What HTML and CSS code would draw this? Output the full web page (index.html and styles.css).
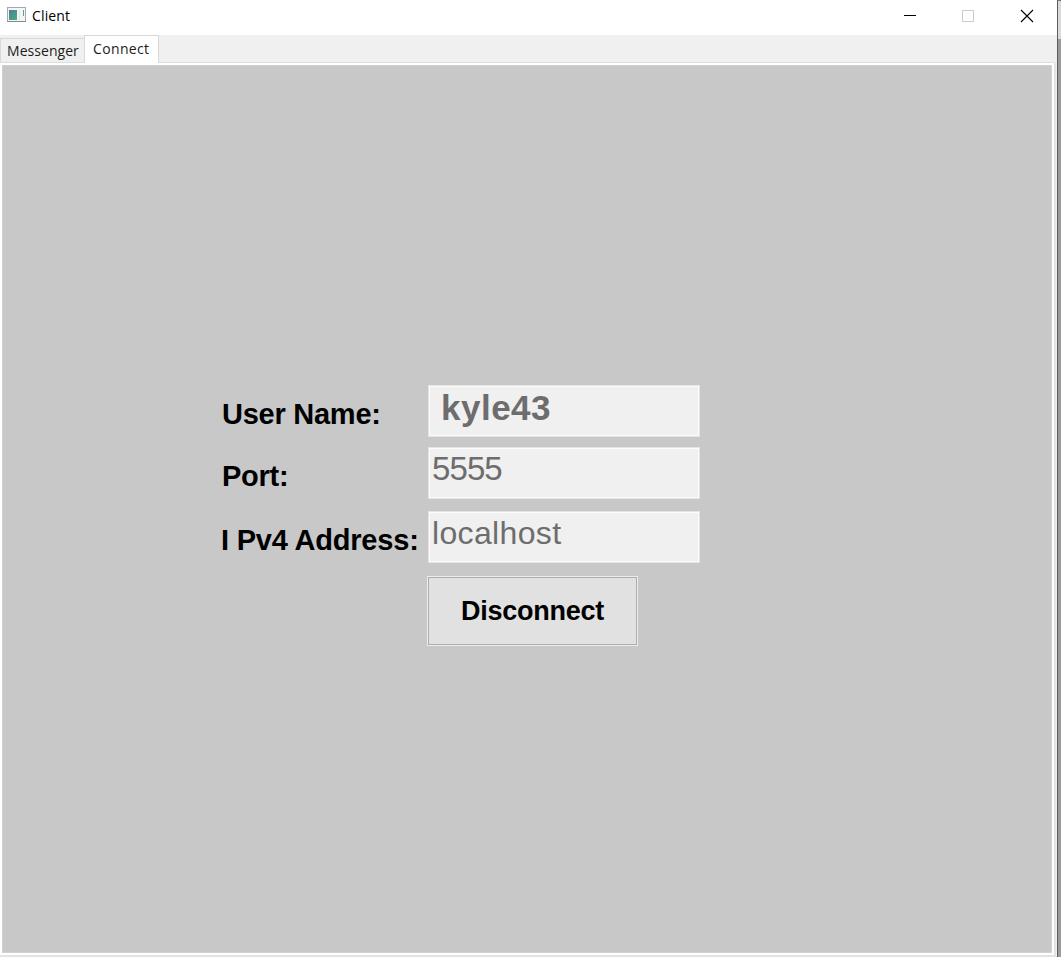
FILE: index.html
```
<!DOCTYPE html>
<html lang="en">
<head>
<meta charset="utf-8">
<title>Client</title>
<link rel="stylesheet" href="styles.css">
</head>
<body>
<div class="window">
  <header class="titlebar">
    <svg class="app-icon" width="19" height="16" viewBox="0 0 19 16">
      <defs><linearGradient id="g" x1="0" y1="0" x2="1" y2="1"><stop offset="0" stop-color="#4a7c9c"/><stop offset="1" stop-color="#4fae78"/></linearGradient></defs>
      <rect x=".5" y=".5" width="18" height="14" fill="#f4f5f7" stroke="#a4a8af"/>
      <path d="M0 14.500h19" stroke="#858a92"/>
      <rect x="2" y="3" width="8" height="10" fill="url(#g)"/>
      <path d="M12.500 3v10" stroke="#e2e6e9"/>
      <path d="M16.500 3v6" stroke="#55a58c"/>
    </svg>
    <span class="title">Client</span>
    <svg class="controls" width="132" height="16" viewBox="0 0 132 16" fill="none">
      <path d="M0 7.500h12" stroke="#000"/>
      <rect x="58.500" y="2.500" width="11" height="11" stroke="#ccc"/>
      <path d="M117 2l12 12M129 2l-12 12" stroke="#000" stroke-width="1.100"/>
    </svg>
  </header>
  <nav class="tabs">
    <div class="tab">Messenger</div>
    <div class="tab active">Connect</div>
  </nav>
  <div class="pane">
    <main class="page">
      <form class="form">
        <label class="label">User Name:</label>
        <div class="field"><span class="user">kyle43</span></div>
        <label class="label port-label">Port:</label>
        <div class="field port-field"><span class="port">5555</span></div>
        <label class="label address">I Pv4 Address:</label>
        <div class="field"><span class="host">localhost</span></div>
        <button class="button" type="button">Disconnect</button>
      </form>
    </main>
  </div>
</div>
<div class="behind"></div>
</body>
</html>
```
FILE: styles.css
```
* { box-sizing: border-box; }
body {
  margin: 0;
  width: 1061px;
  height: 957px;
  display: flex;
  overflow: hidden;
  font-family: "Liberation Sans", Arial, sans-serif;
  white-space: nowrap;
}
.window {
  width: 1057px;
  height: 957px;
  display: flex;
  flex-direction: column;
  background: #f0f0f0;
}
.behind {
  width: 4px;
  border-left: 1px solid #5c5c5c;
  border-top: 1px solid #8b6f64;
  background: linear-gradient(#dbd9d9 38px, #9b9b9b 38px);
}
.titlebar {
  height: 35px;
  flex: none;
  display: flex;
  align-items: flex-start;
  padding: 7px 21px 0 7px;
  background: #fff;
}
.title {
  margin: -1px 0 0 6px;
  font: 14px/20px "Open Sans", sans-serif;
  letter-spacing: 0.15px;
}
.controls { margin: 1px 0 0 auto; }
.tabs {
  width: 1055px;
  height: 28px;
  flex: none;
  display: flex;
  align-items: flex-end;
  box-shadow: inset 0 -1px #dedede;
  font: 14px/20px "Open Sans", sans-serif;
  color: #1c1c1c;
}
.tab {
  width: 84px;
  height: 25px;
  padding: 2px 0 0 6px;
  border: 1px solid #d9d9d9;
  border-right: 0;
  border-bottom: 0;
  letter-spacing: 0.05px;
}
.tab.active {
  width: 75px;
  height: 28px;
  padding: 3px 0 0 8px;
  background: #fff;
  border-right: 1px solid #d9d9d9;
  letter-spacing: 0.35px;
}
.pane {
  width: 1056px;
  height: 894px;
  padding: 2px;
  background: #fff;
  border-right: 2px solid #e3e3e3;
  border-bottom: 2px solid #e3e3e3;
}
.page {
  width: 1050px;
  height: 888px;
  padding: 320px 0 0 220px;
  background: #c8c8c8;
  box-shadow: inset 0 0 0 1px #d0d0d0;
}
.form {
  display: grid;
  grid-template-columns: 206px 272px;
  grid-template-rows: 52px 52px 52px 70px;
  row-gap: 11px;
}
.label {
  font-size: 29px;
  font-weight: bold;
  line-height: 58px;
  letter-spacing: -0.25px;
}
.port-label { line-height: 57px; }
.address { margin-left: -1px; letter-spacing: -0.2px; }
.field {
  height: 52px;
  background: #f0f0f0;
  border: 1px solid #e3e3e3;
  box-shadow: inset 0 0 0 1px #fcfcfc;
  color: #6d6d6d;
}
.port-field { margin-top: -1px; }
.field span { display: block; padding-left: 3px; line-height: 42px; }
.field .user { padding-left: 12px; font-size: 35px; font-weight: bold; line-height: 44px; letter-spacing: 0.5px; }
.field .port { font-size: 33px; letter-spacing: -0.9px; }
.field .host { font-size: 32px; letter-spacing: 0.35px; }
.button {
  grid-column: 2;
  width: 211px;
  height: 70px;
  margin: 2px 0 0 -1px;
  padding: 0;
  border: 1px solid #ececec;
  box-shadow: inset 0 0 0 1px #adadad;
  background: #e1e1e1;
  font: bold 27px/67px "Liberation Sans", Arial, sans-serif;
  letter-spacing: -0.25px;
  color: #000;
}
```
